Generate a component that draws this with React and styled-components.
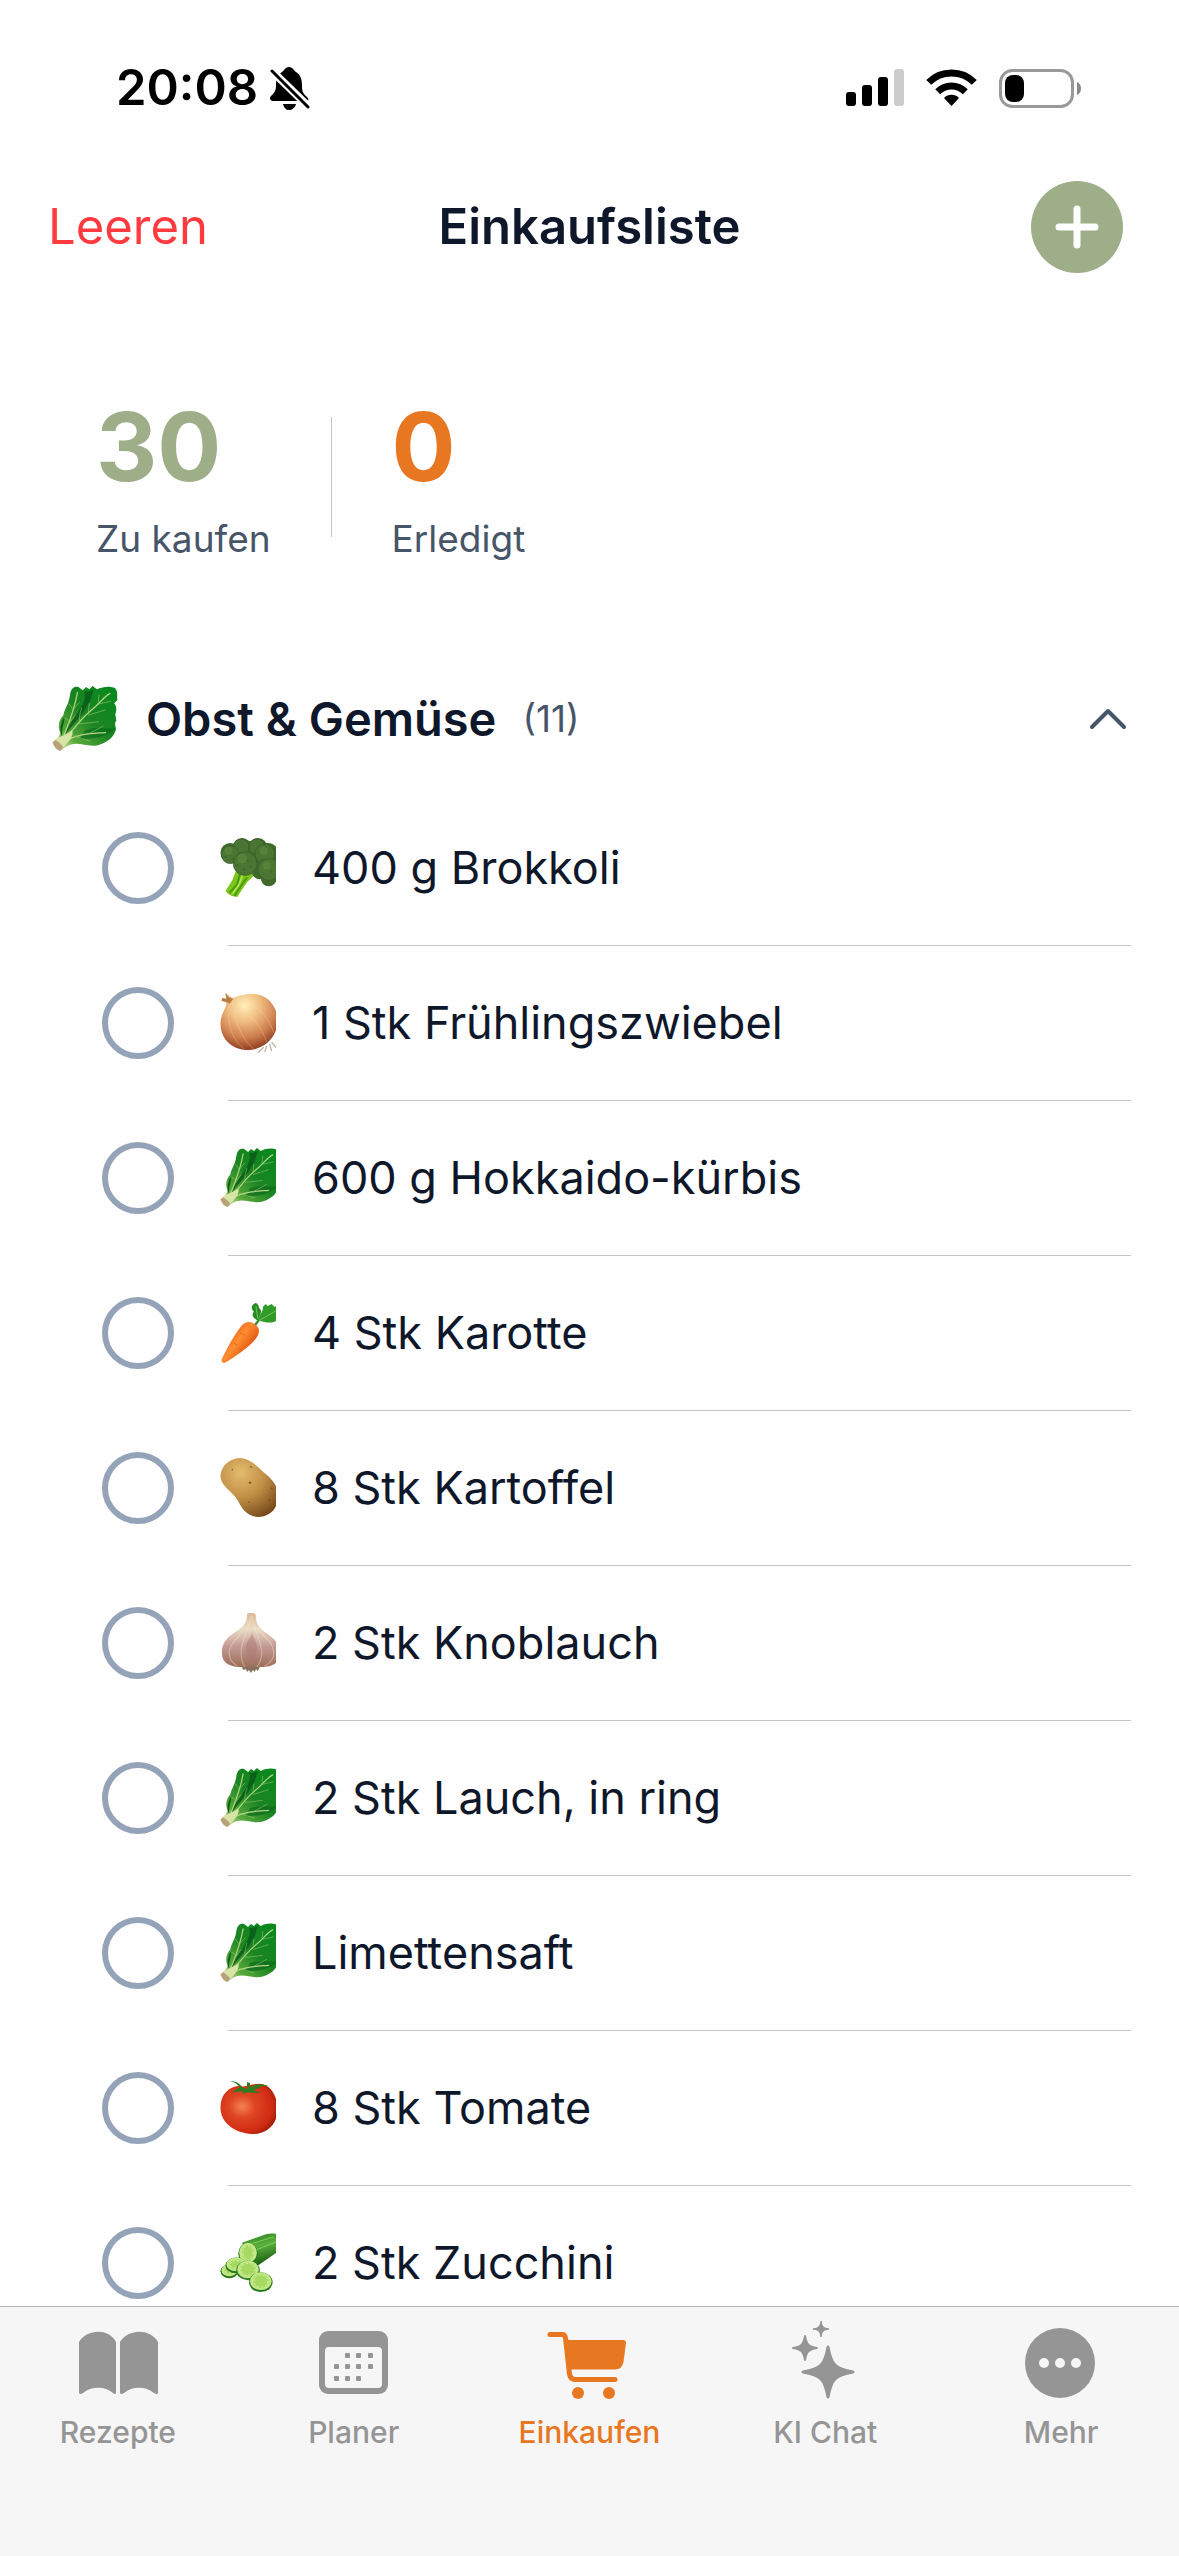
import React, { useState } from 'react'
import styled, { createGlobalStyle } from 'styled-components'

const GlobalStyle = createGlobalStyle`
*{
    box-sizing: border-box;
    margin: 0;
    padding: 0;
}
body{
    background-color: #fefefe;
    color: #0f172a;
    font-family: Inter, "Liberation Sans", sans-serif;
}
button{
    border: none;
    background: none;
    font: inherit;
    color: inherit;
    cursor: pointer;
}
svg{
    display: block;
    flex-shrink: 0;
}
`

const Screen = styled.div`
    display: flex;
    flex-direction: column;
    height: 100vh;
`

const StatusBar = styled.div`
    display: flex;
    justify-content: space-between;
    align-items: center;
    padding: 58px 98px 63px 116px;
    color: #000;
`

const StatusGroup = styled.div`
    display: flex;
    align-items: center;
    gap: ${(p) => p.$gap}px;
`

const Clock = styled.span`
    font-size: 49px;
    line-height: 60px;
    font-weight: 600;
`

const Header = styled.header`
    display: grid;
    grid-template-columns: 1fr auto 1fr;
    align-items: center;
    padding: 0 48px;
`

const ClearButton = styled.button`
    justify-self: start;
    font-size: 49px;
    line-height: 60px;
    color: #ff3b3f;
`

const Title = styled.h1`
    font-size: 49px;
    line-height: 60px;
    font-weight: 600;
`

const AddButton = styled.button`
    justify-self: end;
    display: flex;
    align-items: center;
    justify-content: center;
    width: 92px;
    height: 92px;
    margin-right: 8px;
    border-radius: 50%;
    background-color: #9dae88;
`

const Content = styled.main`
    flex: 1;
    min-height: 0;
    overflow: hidden;
`

const Stats = styled.section`
    display: flex;
    align-items: center;
    gap: 60px;
    padding: 122px 96px 125px;
`

const Stat = styled.div`
    display: flex;
    flex-direction: column;
    gap: 21px;
`

const StatNumber = styled.strong`
    font-size: 95px;
    line-height: 104px;
    font-weight: 700;
    color: ${(p) => p.$color};
`

const StatLabel = styled.span`
    font-size: 37px;
    line-height: 38px;
    color: #475569;
`

const StatDivider = styled.div`
    width: 1px;
    height: 120px;
    background-color: #c6c6c8;
`

const CategoryButton = styled.button`
    display: flex;
    align-items: center;
    width: 100%;
    height: 72px;
    margin-bottom: 36px;
    padding: 0 52px;
    text-align: left;
`

const CategoryName = styled.span`
    margin-left: 28px;
    font-size: 47px;
    line-height: 60px;
    font-weight: 600;
`

const Count = styled.span`
    flex: 1;
    margin-left: 26px;
    font-size: 37px;
    line-height: 60px;
    color: #475569;
`

const List = styled.ul`
    list-style: none;
`

const Row = styled.label`
    display: flex;
    align-items: center;
    height: 154px;
    padding: 0 49px 0 102px;
    cursor: pointer;
`

const Check = styled.input`
    appearance: none;
    flex-shrink: 0;
    width: 72px;
    height: 72px;
    border: 6px solid #94a3b8;
    border-radius: 50%;
    &:checked{
        border-color: #9dae88;
        background-color: #9dae88;
    }
`

const EmojiBox = styled.span`
    width: 56px;
    margin: 0 36px 0 46px;
    overflow: hidden;
`

const ItemText = styled.span`
    font-size: 45px;
    line-height: 60px;
`

const Separator = styled.hr`
    height: 1px;
    margin: 0 48px 0 228px;
    border: none;
    background-color: #c6c6c8;
`

const TabBar = styled.nav`
    display: flex;
    padding: 13px 0 106px;
    border-top: 1px solid #b3b3b3;
    background-color: #f6f6f6;
`

const Tab = styled.a`
    flex: 1;
    display: flex;
    flex-direction: column;
    align-items: center;
    gap: 14px;
    font-size: 30px;
    line-height: 36px;
    font-weight: 500;
    text-decoration: none;
    color: ${(p) => (p.$active ? '#e87722' : '#959595')};
`

const Lettuce = () => (
    <>
        <defs>
            <linearGradient id="leaf" x1="1" y1="0" x2="0.1" y2="1">
                <stop offset="0" stopColor="#068a1c" />
                <stop offset="0.5" stopColor="#1a8422" />
                <stop offset="0.8" stopColor="#58a83a" />
                <stop offset="1" stopColor="#dfe9b4" />
            </linearGradient>
        </defs>
        <path d="M1 53C4 49 7 46 7 43C4 36 7 30 10 27C11 21 15 17 16 9C17 2 20 0 24 1L28 4L31 1L34 3L37 0L41 3C47 0 54 0 58 2C61 6 59 10 60 13L57 16C60 20 59 23 58 26L59 32C56 36 60 38 58 42C55 50 47 53 41 55C31 56 25 52 17 54C13 55 10 58 7 60Z" fill="url(#leaf)" />
        <path d="M29 5C32 11 27 19 23 25C19 31 14 37 11 46C20 34 28 27 35 13L38 3L33 5Z" fill="#07571a" opacity="0.8" />
        <path d="M9 47C5 40 9 32 11 28C11 35 8 40 9 47Z" fill="#0a5d18" />
        <path d="M30 41C39 37 48 40 58 39C52 46 41 49 25 49Z" fill="#0b6b1c" opacity="0.7" />
        <path d="M6 55C16 46 22 34 34 24S47 10 53 7M9 50C14 36 20 24 23 6M13 50C25 44 37 44 49 43" fill="none" stroke="#b4d684" strokeWidth="1.2" strokeLinecap="round" />
        <path d="M25 35C24 28 26 24 27 20M33 26L34 16M33 27L49 22M25 35L43 33M42 17L43 8M41 17L54 14M19 46L35 51M32 45L47 37M15 32L10 29M19 22L15 16M18 23L25 15M14 36L21 27" fill="none" stroke="#8cc468" strokeWidth="0.6" />
        <path d="M0 52L4 48C8 47 13 45 18 41C20 46 16 51 7 60L3 58Z" fill="#d8e4a5" />
        <path d="M0 52L3 50C6 52 9 55 10 57L7 60C4 59 1 56 0 52Z" fill="#b8a279" />
    </>
)

const Broccoli = () => (
    <>
        <path d="M17 30L12 43L5 54C8 58 13 60 17 60L27 45L34 38L45 42L42 30Z" fill="#7cc51b" />
        <path d="M20 36L17 47L9 56M27 40L20 50L14 59" fill="none" stroke="#4c9a0c" strokeWidth="2" />
        <path d="M23 36L19 47L12 57" fill="none" stroke="#b7e55a" strokeWidth="1.5" />
        <g fill="#40692c">
            <circle cx="22" cy="9" r="9" />
            <circle cx="30" cy="13" r="10" />
            <circle cx="38" cy="10" r="10" />
            <circle cx="48" cy="16" r="11" />
            <circle cx="10" cy="15" r="10" />
            <circle cx="49" cy="41" r="8" />
            <circle cx="40" cy="34" r="8" />
            <circle cx="36" cy="24" r="10" />
        </g>
        <g fill="#4a7532" stroke="#38602a" strokeWidth="0.8">
            <circle cx="21" cy="9" r="8" />
            <circle cx="10" cy="17" r="9" />
            <circle cx="37" cy="9" r="8" />
            <circle cx="45" cy="16" r="10" />
            <circle cx="49" cy="32" r="11" />
            <circle cx="25" cy="26" r="12" />
        </g>
        <g fill="#6b9748" opacity="0.4">
            <circle cx="22" cy="21" r="5" />
            <circle cx="8" cy="13" r="4" />
            <circle cx="44" cy="13" r="4" />
            <circle cx="47" cy="28" r="4" />
        </g>
        <g fill="#2f5220" opacity="0.5">
            <circle cx="17" cy="28" r="1" />
            <circle cx="24" cy="32" r="1" />
            <circle cx="31" cy="29" r="1" />
            <circle cx="28" cy="23" r="1" />
            <circle cx="42" cy="22" r="1" />
            <circle cx="52" cy="34" r="1" />
            <circle cx="5" cy="19" r="1" />
            <circle cx="12" cy="21" r="1" />
        </g>
    </>
)

const Onion = () => (
    <>
        <defs>
            <radialGradient id="onion" cx="0.42" cy="0.22" r="0.8">
                <stop offset="0" stopColor="#fff0b8" />
                <stop offset="0.35" stopColor="#f0bd80" />
                <stop offset="0.7" stopColor="#cf7f4e" />
                <stop offset="1" stopColor="#8c3b20" />
            </radialGradient>
        </defs>
        <path d="M44 55L38 61M47 54L45 60M50 52L52 59M52 50L57 56" stroke="#b9ad98" strokeWidth="1.2" />
        <path d="M5 0L9 3L12 5C18 3 24 1 33 1C47 1 58 13 58 28C58 46 43 58 28 58C11 58 0 46 0 31C0 22 5 18 6 10L1 8L2 5L6 6Z" fill="url(#onion)" />
        <path d="M10 8C6 24 8 44 24 57M12 7C14 26 20 46 34 57M14 6C26 16 42 34 47 50M15 5C32 9 49 22 54 40" fill="none" stroke="#ffe0a2" strokeWidth="0.8" opacity="0.4" />
        <path d="M5 0L8 4L13 6L9 11L6 9L1 8L2 5L6 6Z" fill="#b87d42" />
    </>
)

const Carrot = () => (
    <>
        <defs>
            <linearGradient id="carrot" x1="0.2" y1="0.2" x2="0.8" y2="0.7">
                <stop offset="0" stopColor="#e95d10" />
                <stop offset="0.45" stopColor="#ff8d32" />
                <stop offset="1" stopColor="#dc4c0b" />
            </linearGradient>
        </defs>
        <path d="M34 24L40 16L52 6" fill="none" stroke="#3c8f2b" strokeWidth="2.5" />
        <path d="M38 18C33 15 31 12 34 9C30 5 32 1 36 0C40 2 38 5 41 7C42 11 39 14 38 18Z" fill="#278b23" />
        <path d="M38 18C40 11 44 8 43 4L46 1L48 3L52 1L55 4L60 2V16L55 19C49 21 45 19 38 18Z" fill="#2f9b29" />
        <path d="M39 18L58 7M36 3L38 16" stroke="#80c85a" strokeWidth="0.9" />
        <path d="M1 58C6 47 14 33 20 25C24 19 30 18 34 21C41 25 40 31 36 36C28 46 14 55 4 61C2 61 1 60 1 58Z" fill="url(#carrot)" />
        <path d="M20 30L25 33M27 22L30 25M30 37L33 39M14 41L17 43M19 46L22 48" stroke="#e0600f" strokeWidth="0.8" />
    </>
)

const Potato = () => (
    <>
        <defs>
            <radialGradient id="potato" cx="0.35" cy="0.25" r="0.85">
                <stop offset="0" stopColor="#e3bb6c" />
                <stop offset="0.5" stopColor="#c08f46" />
                <stop offset="1" stopColor="#744619" />
            </radialGradient>
        </defs>
        <path d="M0 18C1 7 10 0 21 0C33 2 38 10 47 17C56 25 61 34 58 44C56 54 48 60 38 60C27 59 22 52 18 44C13 34 0 29 0 18Z" fill="url(#potato)" />
        <g fill="#7d5322">
            <circle cx="30" cy="25" r="1.2" />
            <circle cx="31" cy="9" r="0.9" />
            <circle cx="12" cy="12" r="0.8" />
            <circle cx="52" cy="31" r="1.1" />
            <circle cx="50" cy="43" r="1.1" />
            <circle cx="29" cy="45" r="0.8" />
        </g>
    </>
)

const Garlic = () => (
    <>
        <defs>
            <linearGradient id="garlic" x1="0" y1="0" x2="0" y2="1">
                <stop offset="0" stopColor="#dcb893" />
                <stop offset="0.3" stopColor="#eadcc4" />
                <stop offset="0.62" stopColor="#c39a93" />
                <stop offset="1" stopColor="#9c6d58" />
            </linearGradient>
        </defs>
        <path d="M27 1C29-1 34-1 36 2C35 13 43 18 50 23C60 30 61 39 60 44C58 53 50 55 41 55H22C13 55 4 53 2 45C0 36 3 29 10 23C19 16 27 14 27 1Z" fill="url(#garlic)" />
        <path d="M31 3C30 16 21 26 21 40C21 47 22 51 25 55M32 3C33 16 41 26 42 40C42 47 40 51 37 55M29 11C24 21 12 26 9 38C8 46 12 51 17 54M34 12C40 22 53 27 54 39C55 46 51 51 45 54" fill="none" stroke="#f4e8d7" strokeWidth="1.2" opacity="0.4" />
        <path d="M26 35C26 28 31 25 32 20C33 25 37 28 37 35C37 45 35 50 32 54C28 50 26 45 26 35Z" fill="#a97972" opacity="0.5" />
        <path d="M22 55H40L38 59L36 57L35 60L33 58L31 61L29 58L27 60L26 57L23 58Z" fill="#86705c" />
    </>
)

const Tomato = () => (
    <>
        <defs>
            <radialGradient id="tomato" cx="0.38" cy="0.45" r="0.65">
                <stop offset="0" stopColor="#f48254" />
                <stop offset="0.35" stopColor="#df4523" />
                <stop offset="0.8" stopColor="#cf2b12" />
                <stop offset="1" stopColor="#a11c0b" />
            </radialGradient>
        </defs>
        <path d="M19 8C25 10 30 6 38 6C50 5 58 18 58 32C58 48 46 57 32 57C15 56 0 46 0 30C0 17 8 9 19 8Z" fill="url(#tomato)" />
        <path d="M10 3C15 3 19 5 23 10L27 11L27 4L30 5L30 10C36 5 42 6 49 8C42 8 38 10 34 13L41 15C34 16 30 14 27 15L22 16L24 13C19 15 17 13 12 15C15 11 19 10 20 10C17 6 14 4 10 3Z" fill="#2f7d20" />
    </>
)

const Slice = ({ cx, cy, rx, ry }) => (
    <g>
        <ellipse cx={cx} cy={cy + 1} rx={rx} ry={ry} fill="#2a7a1c" />
        <ellipse cx={cx} cy={cy} rx={rx - 1} ry={ry - 1} fill="#c3e889" />
        <ellipse cx={cx} cy={cy} rx={rx - 4} ry={ry - 3} fill="#a6d961" />
        <ellipse cx={cx} cy={cy} rx={rx - 5} ry={ry - 4} fill="none" stroke="#d9f3a6" strokeDasharray="2 2" />
    </g>
)

const Cucumber = () => (
    <>
        <defs>
            <linearGradient id="cucumber" x1="0.3" y1="0" x2="0.6" y2="1">
                <stop offset="0" stopColor="#2c8420" />
                <stop offset="0.4" stopColor="#5bb13c" />
                <stop offset="1" stopColor="#14550f" />
            </linearGradient>
        </defs>
        <path d="M22 10L47 1C52 0 57 0 60 3V18L38 33L30 32Z" fill="url(#cucumber)" />
        <path d="M28 12L54 4M34 18L57 9" stroke="#83cb5b" strokeWidth="1" />
        <Slice cx={28} cy={20} rx={10} ry={11} />
        <Slice cx={9} cy={38} rx={9} ry={7} />
        <Slice cx={16} cy={32} rx={11} ry={8} />
        <Slice cx={28} cy={37} rx={12} ry={10} />
        <Slice cx={41} cy={49} rx={12} ry={10} />
    </>
)

const drawings = {
    lettuce: Lettuce,
    broccoli: Broccoli,
    onion: Onion,
    carrot: Carrot,
    potato: Potato,
    garlic: Garlic,
    tomato: Tomato,
    cucumber: Cucumber,
}

const Emoji = ({ name, size = 60 }) => {
    const Drawing = drawings[name]
    return (
        <svg width={size} height={size} viewBox="0 0 60 61" aria-hidden="true">
            <Drawing />
        </svg>
    )
}

const BellOff = () => (
    <svg width="40" height="43" viewBox="0 0 40 43">
        <path d="M12 5C14 4 15 0 19 0S24 4 26 5C31 8 32 13 32 19C32 26 34 27 37 30C39 32 39 34 36 34H3C0 34-1 31 1 29C4 26 6 24 6 19C6 13 7 8 12 5Z" />
        <path d="M13 37H26C25 41 22 43 19 43S14 41 13 37Z" />
        <path d="M1 3L39 40" stroke="#fefefe" strokeWidth="8" />
        <path d="M2 4L38 40" stroke="#000" strokeWidth="3" strokeLinecap="round" />
    </svg>
)

const Signal = () => (
    <svg width="58" height="38" viewBox="0 0 58 38">
        <rect y="23" width="10" height="14" rx="3" />
        <rect x="16" y="16" width="10" height="21" rx="3" />
        <rect x="32" y="8" width="10" height="29" rx="3" />
        <rect x="48" width="10" height="37" rx="3" fill="#ccc" />
    </svg>
)

const Wifi = () => (
    <svg width="51" height="38" viewBox="0 0 51 38">
        <path d="M2.7 13.4A32.2 32.2 0 0 1 48.3 13.4" fill="none" stroke="#000" strokeWidth="7" />
        <path d="M11.7 22.8A19.5 19.5 0 0 1 39.3 22.8" fill="none" stroke="#000" strokeWidth="7" />
        <path d="M18 29C22 24.600 29 24.600 33 29L25.500 37Z" />
    </svg>
)

const Battery = () => (
    <svg width="82" height="39" viewBox="0 0 82 39">
        <rect x="1.5" y="1.5" width="72" height="36" rx="12" fill="none" stroke="#999" strokeWidth="3" />
        <rect x="6" y="6" width="19" height="27" rx="8" />
        <path d="M78 13C80.500 14 82 16.500 82 19.500S80.500 25 78 26Z" fill="#888" />
    </svg>
)

const BookIcon = () => (
    <>
        <path d="M3 22C11 9 33 8 40 22V73Q39 75 37 73C29 66 15 66 7 73Q4 75 3 73Z" />
        <path d="M44 22C52 9 74 8 82 22V73Q81 75 78 73C70 66 56 66 48 73Q45 75 44 73Z" />
    </>
)

const days = [[36, 36], [47, 36], [59, 36], [25, 47], [36, 47], [47, 47], [59, 47], [25, 59], [36, 59], [47, 59]]

const CalendarIcon = () => (
    <>
        <rect x="7" y="11" width="69" height="63" rx="9" />
        <rect x="13" y="27" width="57" height="41" rx="4" fill="#f6f6f6" />
        {days.map(([x, y]) => (
            <rect key={`${x}-${y}`} x={x - 3} y={y - 3} width="5" height="5" rx="1" />
        ))}
    </>
)

const CartIcon = () => (
    <>
        <path d="M3 14.500H15Q18 14.500 18.500 18L22.500 54Q23.500 59.500 28 59.500H68" fill="none" stroke="currentColor" strokeWidth="5" strokeLinecap="round" />
        <path d="M18 20H76Q79 20 79 23L76.500 42Q75 49.500 68 49.500H23Z" />
        <circle cx="31" cy="73" r="6" />
        <circle cx="62" cy="73" r="6" />
    </>
)

const star = (x, y, r) => {
    const a = r * 0.13
    const b = r * 0.28
    return `M${x} ${y - r}C${x + a} ${y - b} ${x + b} ${y - a} ${x + r} ${y}C${x + b} ${y + a} ${x + a} ${y + b} ${x} ${y + r}C${x - a} ${y + b} ${x - b} ${y + a} ${x - r} ${y}C${x - b} ${y - a} ${x - a} ${y - b} ${x} ${y - r}Z`
}

const SparkleIcon = () => (
    <g stroke="currentColor" strokeLinejoin="round">
        <path d={star(45, 52, 25)} strokeWidth="3" />
        <path d={star(22, 28, 12)} strokeWidth="2" />
        <path d={star(38, 9, 8)} strokeWidth="1" />
    </g>
)

const MoreIcon = () => (
    <>
        <circle cx="41" cy="43" r="35" />
        <g fill="#f6f6f6">
            <circle cx="25" cy="43" r="5" />
            <circle cx="41" cy="43" r="5" />
            <circle cx="57" cy="43" r="5" />
        </g>
    </>
)

const products = [
    { id: 1, icon: 'broccoli', text: '400 g Brokkoli' },
    { id: 2, icon: 'onion', text: '1 Stk Frühlingszwiebel' },
    { id: 3, icon: 'lettuce', text: '600 g Hokkaido-kürbis' },
    { id: 4, icon: 'carrot', text: '4 Stk Karotte' },
    { id: 5, icon: 'potato', text: '8 Stk Kartoffel' },
    { id: 6, icon: 'garlic', text: '2 Stk Knoblauch' },
    { id: 7, icon: 'lettuce', text: '2 Stk Lauch, in ring' },
    { id: 8, icon: 'lettuce', text: 'Limettensaft' },
    { id: 9, icon: 'tomato', text: '8 Stk Tomate' },
    { id: 10, icon: 'cucumber', text: '2 Stk Zucchini' },
]

const tabs = [
    { name: 'Rezepte', Icon: BookIcon },
    { name: 'Planer', Icon: CalendarIcon },
    { name: 'Einkaufen', Icon: CartIcon },
    { name: 'KI Chat', Icon: SparkleIcon },
    { name: 'Mehr', Icon: MoreIcon },
]

const App = () => {
    const [done, setdone] = useState([])
    const [open, setopen] = useState(true)

    const toggle = (id) => {
        setdone(done.includes(id) ? done.filter((d) => d !== id) : [...done, id])
    }

    return (
        <Screen>
            <GlobalStyle />
            <StatusBar>
                <StatusGroup $gap={12}>
                    <Clock>20:08</Clock>
                    <BellOff />
                </StatusGroup>
                <StatusGroup $gap={22}>
                    <Signal />
                    <Wifi />
                    <Battery />
                </StatusGroup>
            </StatusBar>
            <Header>
                <ClearButton onClick={() => setdone([])}>Leeren</ClearButton>
                <Title>Einkaufsliste</Title>
                <AddButton aria-label="Hinzufügen">
                    <svg width="44" height="44" viewBox="0 0 44 44">
                        <path d="M22 4V40M4 22H40" stroke="#fff" strokeWidth="7" strokeLinecap="round" />
                    </svg>
                </AddButton>
            </Header>
            <Content>
                <Stats>
                    <Stat>
                        <StatNumber $color="#9dae88">{30 - done.length}</StatNumber>
                        <StatLabel>Zu kaufen</StatLabel>
                    </Stat>
                    <StatDivider />
                    <Stat>
                        <StatNumber $color="#e87722">{done.length}</StatNumber>
                        <StatLabel>Erledigt</StatLabel>
                    </Stat>
                </Stats>
                <CategoryButton aria-expanded={open} onClick={() => setopen(!open)}>
                    <Emoji name="lettuce" size={66} />
                    <CategoryName>Obst &amp; Gemüse</CategoryName>
                    <Count>(11)</Count>
                    <svg width="38" height="22" viewBox="0 0 38 22">
                        <path d={open ? 'M3 19L19 3L35 19' : 'M3 3L19 19L35 3'} fill="none" stroke="#475569" strokeWidth="4" strokeLinecap="round" strokeLinejoin="round" />
                    </svg>
                </CategoryButton>
                {open && (
                    <List>
                        {products.map((item) => (
                            <li key={item.id}>
                                <Row htmlFor={`item-${item.id}`}>
                                    <Check
                                        id={`item-${item.id}`}
                                        type="checkbox"
                                        checked={done.includes(item.id)}
                                        onChange={() => toggle(item.id)}
                                    />
                                    <EmojiBox>
                                        <Emoji name={item.icon} />
                                    </EmojiBox>
                                    <ItemText>{item.text}</ItemText>
                                </Row>
                                <Separator />
                            </li>
                        ))}
                    </List>
                )}
            </Content>
            <TabBar>
                {tabs.map(({ name, Icon }) => (
                    <Tab key={name} href="#" $active={name === 'Einkaufen'}>
                        <svg width="84" height="80" viewBox="0 0 84 80" fill="currentColor">
                            <Icon />
                        </svg>
                        {name}
                    </Tab>
                ))}
            </TabBar>
        </Screen>
    )
}

export default App
